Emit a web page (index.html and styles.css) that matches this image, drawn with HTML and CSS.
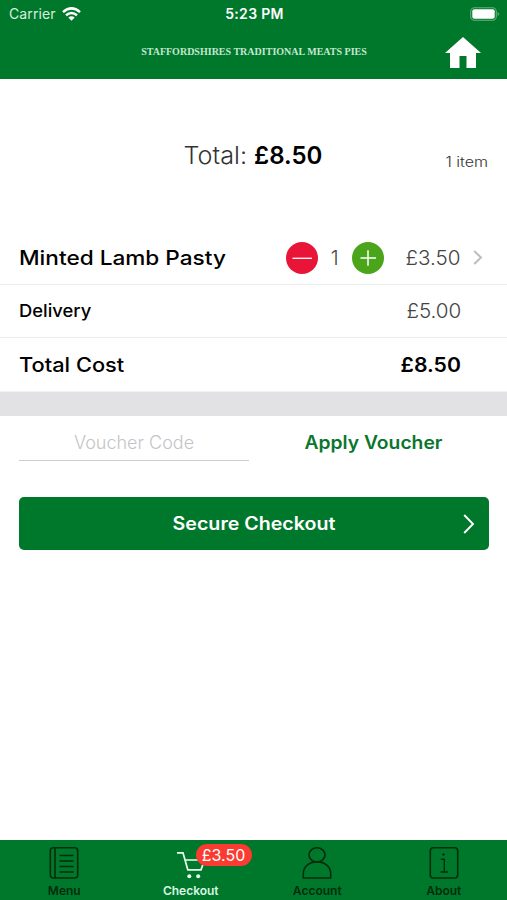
FILE: index.html
```html
<!DOCTYPE html>
<html lang="en">
<head>
<meta charset="utf-8">
<meta name="viewport" content="width=device-width">
<title>Checkout</title>
<link rel="stylesheet" href="styles.css">
</head>
<body>
<header class="header">
  <div class="status">
    <div class="carrier"><span>Carrier</span>
      <svg width="19" height="14" viewBox="0 0 19 14" fill="none" stroke="#fff" stroke-width="2.5"><path d="M1 5.1Q9.500-2.300 18 5.100M4 8.300Q9.500 3.600 15 8.300"/><path d="M6.300 10.500Q9.500 7.900 12.700 10.500L9.500 13.700Z" fill="#fff" stroke="none"/></svg>
    </div>
    <time class="clock">5:23 PM</time>
    <svg class="battery" width="30" height="14" viewBox="0 0 30 14"><rect x=".7" y=".7" width="25.600" height="12.600" rx="3.800" fill="none" stroke="#69ae7e" stroke-width="1.100"/><rect x="2.300" y="2.300" width="22.400" height="9.400" rx="2" fill="#fff"/><path d="M27.700 5Q30.700 7 27.700 9Z" fill="#69ae7e"/></svg>
  </div>
  <div class="titlebar">
    <h1 class="brand">STAFFORDSHIRES TRADITIONAL MEATS PIES</h1>
    <svg class="home" width="36" height="31" viewBox="0 0 36 31" fill="#fff"><path d="M18 0 36 16H31V31H21.500V19H14.500V31H5V16H0Z"/></svg>
  </div>
</header>
<main class="main">
  <section class="summary">
    <p class="sum"><span class="sum-label">Total:</span><strong class="sum-value">£8.50</strong></p>
    <span class="count">1 item</span>
  </section>
  <section class="lines">
    <div class="row">
      <span class="name product">Minted Lamb Pasty</span>
      <div class="stepper">
        <svg width="32" height="32" viewBox="0 0 32 32"><circle cx="16" cy="16" r="16" fill="#e91539"/><path d="M6.500 16.300H26" stroke="#fff" stroke-width="1.300"/></svg>
        <span class="qty">1</span>
        <svg width="32" height="32" viewBox="0 0 32 32"><circle cx="16" cy="16" r="16" fill="#4ba51b"/><path d="M8.500 16H24M16 8.300V23.700" stroke="#fff" stroke-width="1.500"/></svg>
      </div>
      <span class="price">£3.50</span>
      <svg class="more" width="10" height="15" viewBox="0 0 10 15" fill="none" stroke="#bdbdbf" stroke-width="2"><path d="M1.200 1 8 7.500 1.200 14"/></svg>
    </div>
    <div class="row"><span class="name delivery">Delivery</span><span class="price">£5.00</span></div>
    <div class="row last"><span class="name cost">Total Cost</span><span class="price total">£8.50</span></div>
  </section>
  <div class="band"></div>
  <section class="voucher">
    <div class="field"><span>Voucher Code</span></div>
    <div class="apply"><span>Apply Voucher</span></div>
  </section>
  <div class="checkout"><span>Secure Checkout</span>
    <svg class="go" width="12" height="20" viewBox="0 0 12 20" fill="none" stroke="#fff" stroke-width="1.900"><path d="M1.200 1 10 10 1.200 19"/></svg>
  </div>
</main>
<nav class="tabs">
  <div class="tab">
    <svg width="32" height="34" viewBox="0 0 32 34" fill="none" stroke="#002d0d" stroke-width="1.600"><rect x="2.300" y="1.800" width="27.400" height="30.200" rx="3"/><path d="M7 2V32M11.500 9.500H25.500M11.500 15H25.500M11.500 20.500H25.500M11.500 26H25.500"/></svg>
    <span class="tab-menu">Menu</span>
  </div>
  <div class="tab active">
    <svg width="32" height="34" viewBox="0 0 32 34" fill="none" stroke="#e9fff0" stroke-width="1.700"><path d="M2 6.800H8L12.800 23.800H26L29.500 14H10"/><circle cx="14.300" cy="30.300" r="2" fill="#e9fff0" stroke="none"/><circle cx="23.200" cy="30.300" r="2" fill="#e9fff0" stroke="none"/></svg>
    <span class="tab-checkout">Checkout</span>
    <b class="badge"><span>£3.50</span></b>
  </div>
  <div class="tab">
    <svg width="32" height="34" viewBox="0 0 32 34" fill="none" stroke="#002d0d" stroke-width="1.600"><ellipse cx="16" cy="8.800" rx="8" ry="7.100"/><path d="M2.300 32V28C2.300 20.500 8 15.900 16 15.900S29.700 20.500 29.700 28V32Z"/></svg>
    <span class="tab-account">Account</span>
  </div>
  <div class="tab">
    <svg width="32" height="34" viewBox="0 0 32 34" fill="none" stroke="#002d0d" stroke-width="1.600"><rect x="2.300" y="1.800" width="27.400" height="30.200" rx="3"/><path d="M12.800 13.200H16.300V25.800M12.500 26H20" stroke-width="1.400"/><circle cx="15.500" cy="8.500" r="1.300" fill="#002d0d" stroke="none"/></svg>
    <span class="tab-about">About</span>
  </div>
</nav>
</body>
</html>
```

FILE: styles.css
```css
* { box-sizing: border-box; }
body {
  margin: 0;
  height: 900px;
  display: flex;
  flex-direction: column;
  background: #fff;
  color: #000;
  font-family: Inter, "Liberation Sans", sans-serif;
  white-space: nowrap;
  overflow: hidden;
}
p, h1 { margin: 0; }
svg { display: block; flex: none; }
.header { height: 79px; background: #00782b; color: #fff; }
.status { height: 27px; display: grid; grid-template-columns: 1fr auto 1fr; align-items: center; padding: 0 7px 0 9px; font-size: 14px; }
.carrier { display: flex; align-items: center; gap: 6px; color: #d9efdf; letter-spacing: .1px; }
.clock { font-weight: 600; letter-spacing: .3px; }
.battery { justify-self: end; }
.titlebar { height: 50px; display: grid; grid-template-columns: 1fr auto 1fr; align-items: center; padding: 0 26px 0 27px; }
.brand { grid-column: 2; font: bold 10px/12px "Liberation Serif", serif; letter-spacing: .01px; color: #c5e7cf; }
.home { justify-self: end; }
.main { flex: 1; }
.summary { height: 152px; padding: 1px 19px 0; display: grid; grid-template-columns: 1fr auto 1fr; align-items: center; }
.sum { grid-column: 2; display: flex; gap: 9px; font-size: 24px; line-height: 30px; }
.sum-label { font-weight: 300; color: #333; transform: scaleX(1.05); }
.sum-value { font-weight: 600; }
.count { justify-self: end; padding-top: 12px; font-size: 14px; font-weight: 300; color: #333; transform: scaleX(1.15); transform-origin: right; }
.row { height: 53px; padding: 0 46px 0 19px; display: flex; align-items: center; border-bottom: 1px solid #ececec; }
.row:first-child { height: 54px; padding-right: 24px; }
.last { height: 54px; border-bottom-color: #f1f1f1; }
.name { flex: 1; font-size: 20px; font-weight: 500; transform-origin: left; }
.product { transform: scaleX(1.13); }
.cost { transform: scaleX(1.09); }
.delivery { font-size: 17px; transform: scaleX(1.08); }
.stepper { display: flex; align-items: center; margin-right: 23px; }
.qty { width: 34px; text-align: center; font-size: 20px; font-weight: 300; color: #444; }
.price { font-size: 20px; font-weight: 300; color: #444; transform: scaleX(1.03); transform-origin: right; }
.total { font-weight: 600; color: #000; transform: scaleX(1.06); }
.more { margin-left: 13px; }
.band { height: 24px; background: #e2e2e4; }
.voucher { height: 81px; padding: 0 19px; display: grid; grid-template-columns: 230px 1fr; gap: 10px; align-items: start; font-size: 18px; text-align: center; }
.field { height: 45px; line-height: 54px; border-bottom: 1px solid #cfcfd0; color: #c4c4c7; font-weight: 300; }
.apply { line-height: 54px; font-weight: 600; color: #08772d; transform: scaleX(1.07); }
.checkout { height: 53px; margin: 0 18px 0 19px; padding-right: 14px; border-radius: 5px; background: #00782b; color: #fff; display: grid; grid-template-columns: 26px 1fr 12px; align-items: center; text-align: center; font-size: 18px; font-weight: 600; }
.checkout span { grid-column: 2; transform: scaleX(1.09); }
.tabs { height: 60px; padding: 6px 0 0 1px; display: grid; grid-template-columns: repeat(4, 1fr); background: #00782b; color: #002d0d; font-size: 12px; line-height: 16px; font-weight: 600; }
.tab { position: relative; display: flex; flex-direction: column; align-items: center; gap: 3px; }
.active { color: #d9f7e2; }
.badge { position: absolute; left: 68px; top: -2px; width: 56px; height: 22px; border-radius: 11px; background: #f93b32; color: #fff; text-align: center; font-size: 16px; font-weight: 400; line-height: 22px; }
```
